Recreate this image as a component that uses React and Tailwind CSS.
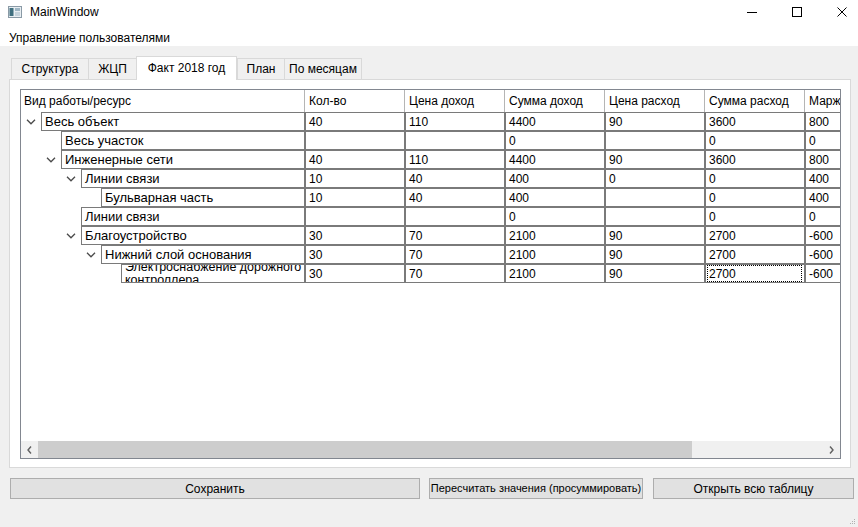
import React from "react";

const rows = [
  { name: "Весь объект", level: 0, open: true, v: ["40", "110", "4400", "90", "3600", "800"] },
  { name: "Весь участок", level: 1, open: false, v: ["", "", "0", "", "0", "0"] },
  { name: "Инженерные сети", level: 1, open: true, v: ["40", "110", "4400", "90", "3600", "800"] },
  { name: "Линии связи", level: 2, open: true, v: ["10", "40", "400", "0", "0", "400"] },
  { name: "Бульварная часть", level: 3, open: false, v: ["10", "40", "400", "", "0", "400"] },
  { name: "Линии связи", level: 2, open: false, v: ["", "", "0", "", "0", "0"] },
  { name: "Благоустройство", level: 2, open: true, v: ["30", "70", "2100", "90", "2700", "-600"] },
  { name: "Нижний слой основания", level: 3, open: true, v: ["30", "70", "2100", "90", "2700", "-600"] },
  { name: "Электроснабжение дорожного|контроллера", level: 4, open: false, v: ["30", "70", "2100", "90", "2700", "-600"], focus: 4 },
];

const headers = ["Кол-во", "Цена доход", "Сумма доход", "Цена расход", "Сумма расход", "Маржа"];
const tabs = ["Структура", "ЖЦП", "Факт 2018 год", "План", "По месяцам"];
const tabW = ["w-[77px]", "w-[48px]", "w-[101px]", "w-[47px]", "w-[78px]"];

const Chevron = () => (
  <svg width="10" height="6" viewBox="0 0 10 6">
    <path d="M1 0.8 L5 4.8 L9 0.8" fill="none" stroke="#4a4a4a" strokeWidth="1.3" />
  </svg>
);

const Row = ({ r }) => {
  const lines = r.name.split("|");
  return (
    <div className="flex h-[19px] shrink-0">
      <div className="w-[284px] shrink-0 flex">
        <div style={{ width: r.level * 20 }} className="shrink-0" />
        <div className="w-[20px] shrink-0 flex items-center justify-center pt-[1px]">
          {r.open && <Chevron />}
        </div>
        <div className="flex-1 border border-[#7a7a7a] flex items-center pl-[3px] overflow-hidden text-[13px] whitespace-nowrap">
          {lines.length > 1 ? (
            <div className="leading-[13px] text-[12.5px]">
              {lines[0]}
              <br />
              {lines[1]}
            </div>
          ) : (
            lines[0]
          )}
        </div>
      </div>
      {r.v.map((val, i) => (
        <div
          key={i}
          className="w-[100px] shrink-0 border border-[#7a7a7a] flex items-center pl-[3px] text-[12px] whitespace-nowrap overflow-hidden"
        >
          {r.focus === i ? (
            <div className="w-full h-full flex items-center border border-dotted border-black -ml-[2px] pl-[1px]">
              {val}
            </div>
          ) : (
            val
          )}
        </div>
      ))}
    </div>
  );
};

export default function App() {
  return (
    <div
      className="w-[858px] h-[527px] bg-[#f0f0f0] flex flex-col overflow-hidden text-black"
      style={{ fontFamily: '"Liberation Sans", Arial, sans-serif' }}
    >
      {/* title bar */}
      <div className="h-[30px] bg-white flex items-center pb-[6px] shrink-0">
        <svg width="14" height="12" viewBox="0 0 14 12" className="ml-[8px]">
          <rect x="0.5" y="0.5" width="13" height="11" fill="#e8eef2" stroke="#8a9aa6" />
          <rect x="1.5" y="2" width="4" height="8" fill="#3f6f7f" />
          <rect x="7" y="2" width="5" height="3" fill="#9fb6c4" />
          <rect x="7" y="6" width="5" height="4" fill="#c5d3dc" />
        </svg>
        <span className="ml-[8px] text-[12px]">MainWindow</span>
        <div className="ml-auto flex items-center gap-[35px] pr-[11px]">
          <div className="w-[10px] flex justify-center">
            <div className="w-[10px] h-px bg-black" />
          </div>
          <div className="w-[10px] h-[10px] border border-black" />
          <svg width="10" height="10" viewBox="0 0 10 10">
            <path d="M0.5 0.5 L9.5 9.5 M9.5 0.5 L0.5 9.5" stroke="#000" strokeWidth="1" />
          </svg>
        </div>
      </div>
      {/* menu */}
      <div className="h-[16px] bg-white flex items-center pl-[9px] text-[12px] shrink-0">
        Управление пользователями
      </div>

      {/* tabs */}
      <div className="flex items-end h-[24px] mt-[9px] ml-[11px] shrink-0">
        {tabs.map((t, i) =>
          i === 2 ? (
            <div
              key={t}
              className={`${tabW[i]} h-[24px] bg-white border-t border-x border-[#d9d9d9] flex items-center justify-center text-[12px] relative z-10 -mb-px pb-[2px]`}
            >
              {t}
            </div>
          ) : (
            <div
              key={t}
              className={`${tabW[i]} h-[21px] bg-[#f0f0f0] border-t border-l ${i === 4 ? "border-r" : ""} border-[#d9d9d9] flex items-center justify-center text-[12px] whitespace-nowrap`}
            >
              {t}
            </div>
          )
        )}
      </div>

      {/* pane */}
      <div className="ml-[9px] w-[842px] h-[389px] bg-white border border-[#d9d9d9] shrink-0 pt-[9px] pl-[10px]">
        <div className="w-[821px] h-[370px] border border-[#828790] bg-white flex flex-col overflow-hidden">
          <div className="flex h-[22px] shrink-0 text-[12px]">
            <div className="w-[284px] shrink-0 border-r border-[#b5b5b5] flex items-center pl-[3px]">
              Вид работы/ресурс
            </div>
            {headers.map((h) => (
              <div
                key={h}
                className="w-[100px] shrink-0 border-r border-[#b5b5b5] flex items-center pl-[4px] whitespace-nowrap"
              >
                {h}
              </div>
            ))}
          </div>
          {rows.map((r, i) => (
            <Row key={i} r={r} />
          ))}
          <div className="flex-1" />
          {/* horizontal scrollbar */}
          <div className="h-[17px] shrink-0 flex bg-[#f0f0f0]">
            <div className="w-[17px] flex items-center justify-center">
              <svg width="5" height="8" viewBox="0 0 5 8">
                <path d="M4 0.5 L1 4 L4 7.5" fill="none" stroke="#606060" strokeWidth="1.4" />
              </svg>
            </div>
            <div className="flex-1 flex">
              <div className="w-[654px] bg-[#cdcdcd]" />
            </div>
            <div className="w-[17px] flex items-center justify-center">
              <svg width="5" height="8" viewBox="0 0 5 8">
                <path d="M1 0.5 L4 4 L1 7.5" fill="none" stroke="#606060" strokeWidth="1.4" />
              </svg>
            </div>
          </div>
        </div>
      </div>

      {/* buttons */}
      <div className="flex mt-[10px] ml-[10px] shrink-0 text-[12px]">
        <button className="w-[410px] h-[21px] bg-[#e1e1e1] border border-[#adadad]">Сохранить</button>
        <button className="w-[214px] h-[21px] bg-[#e1e1e1] border border-[#adadad] ml-[9px] whitespace-nowrap text-[11px]">
          Пересчитать значения (просуммировать)
        </button>
        <button className="w-[201px] h-[21px] bg-[#e1e1e1] border border-[#adadad] ml-[10px]">
          Открыть всю таблицу
        </button>
      </div>

      <div className="flex-1 flex items-end justify-end pr-[2px] pb-[2px]">
        <svg width="8" height="8" viewBox="0 0 8 8">
          <rect x="6" y="2" width="1" height="1" fill="#b0b0b0" />
          <rect x="4" y="4" width="1" height="1" fill="#b0b0b0" />
          <rect x="6" y="4" width="1" height="1" fill="#b0b0b0" />
          <rect x="2" y="6" width="1" height="1" fill="#b0b0b0" />
          <rect x="4" y="6" width="1" height="1" fill="#b0b0b0" />
          <rect x="6" y="6" width="1" height="1" fill="#b0b0b0" />
        </svg>
      </div>
    </div>
  );
}
